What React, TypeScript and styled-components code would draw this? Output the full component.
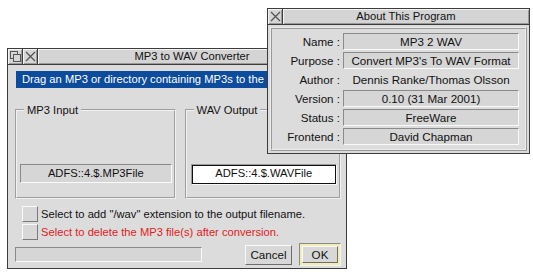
import React from "react";
import styled, { createGlobalStyle } from "styled-components";

const Global = createGlobalStyle`
  html, body { margin: 0; padding: 0; background: #fff; }
  body {
    width: 533px; height: 276px; overflow: hidden;
    font-family: "Liberation Sans", Arial, sans-serif;
    font-size: 11.2px; color: #111;
  }
`;

const Desktop = styled.div`
  position: relative;
  width: 533px;
  height: 276px;
  background: #fff;
  overflow: hidden;
`;

const Window = styled.div<{ $x: number; $y: number; $w: number; $h: number }>`
  position: absolute;
  left: ${(p) => p.$x}px;
  top: ${(p) => p.$y}px;
  width: ${(p) => p.$w}px;
  height: ${(p) => p.$h}px;
  box-sizing: border-box;
  border: 1px solid #3c3c3c;
  background: #dcdcdc;
  display: flex;
  flex-direction: column;
`;

const TitleBar = styled.div`
  display: flex;
  height: 16px;
  box-sizing: border-box;
  border-bottom: 1px solid #3c3c3c;
  flex: none;
`;

const TitleIcon = styled.div`
  width: 15px;
  height: 15px;
  box-sizing: border-box;
  border-right: 1px solid #3c3c3c;
  background: #d6d6d6;
  box-shadow: inset 1px 1px 0 #f4f4f4, inset -1px -1px 0 #9a9a9a;
  display: flex;
  align-items: center;
  justify-content: center;
  flex: none;
`;

const Title = styled.div`
  flex: 1;
  height: 15px;
  line-height: 15px;
  text-align: center;
  background: #d4d4d4;
  box-shadow: inset 1px 1px 0 #f4f4f4, inset -1px -1px 0 #9a9a9a;
  color: #111;
  white-space: nowrap;
`;

const MainBody = styled.div`
  display: flex;
  flex-direction: column;
  padding: 6px 5px 0 7px;
`;

const Banner = styled.div`
  margin-left: 1px;
  height: 17px;
  line-height: 17px;
  background: #0d4c9c;
  color: #fff;
  padding-left: 6px;
  white-space: nowrap;
  overflow: hidden;
`;

const GroupRow = styled.div`
  display: flex;
  gap: 9px;
  margin-top: 21px;
  height: 90px;
`;

const Group = styled.div<{ $w: number }>`
  position: relative;
  width: ${(p) => p.$w}px;
  box-sizing: border-box;
  border: 2px groove #f2f2f2;
  padding: 53px 2px 0 3px;
`;

const GroupLabel = styled.span`
  position: absolute;
  top: -8px;
  left: 7px;
  padding: 0 3px;
  background: #dcdcdc;
  line-height: 14px;
  white-space: nowrap;
`;

const PathField = styled.div<{ $white?: boolean }>`
  box-sizing: border-box;
  height: ${(p) => (p.$white ? 21 : 19)}px;
  line-height: 17px;
  text-align: center;
  white-space: nowrap;
  border: 1px solid;
  border-color: ${(p) => (p.$white ? "#9a9a9a #f8f8f8 #f8f8f8 #9a9a9a" : "#8a8a8a #fafafa #fafafa #8a8a8a")};
  background: ${(p) => (p.$white ? "#fff" : "#d6d6d6")};
  box-shadow: ${(p) => (p.$white ? "inset 0 0 0 1px #111" : "none")};
  margin-left: ${(p) => (p.$white ? 1 : 0)}px;
`;

const OptionList = styled.div`
  display: flex;
  flex-direction: column;
  gap: 2px;
  margin-top: 7px;
  padding-left: 7px;
`;

const Option = styled.div<{ $red?: boolean }>`
  display: flex;
  align-items: center;
  gap: 3px;
  height: 16px;
  color: ${(p) => (p.$red ? "#e31b1b" : "#111")};
  white-space: nowrap;
`;

const CheckBox = styled.div`
  width: 16px;
  height: 16px;
  box-sizing: border-box;
  border: 1px solid;
  border-color: #fafafa #7a7a7a #7a7a7a #fafafa;
  background: #d8d8d8;
  flex: none;
`;

const ActionRow = styled.div`
  display: flex;
  align-items: center;
  margin-top: 3px;
  height: 23px;
`;

const StatusField = styled.div`
  width: 187px;
  height: 15px;
  box-sizing: border-box;
  border: 1px solid;
  border-color: #8a8a8a #fafafa #fafafa #8a8a8a;
  background: #d6d6d6;
`;

const Spacer = styled.div`
  flex: 1;
`;

const Button = styled.div`
  width: 47px;
  height: 20px;
  box-sizing: border-box;
  border: 1px solid;
  border-color: #fafafa #6e6e6e #6e6e6e #fafafa;
  background: #d8d8d8;
  text-align: center;
  line-height: 18px;
  font-size: 11.6px;
`;

const DefaultRing = styled.div`
  margin-left: 7px;
  width: 42px;
  height: 23px;
  box-sizing: border-box;
  border: 1px solid;
  border-color: #8a8a8a #f4f4f4 #f4f4f4 #8a8a8a;
  background: #f3ecb4;
  padding: 2px;
  display: flex;
`;

const OkButton = styled(Button)`
  width: auto;
  flex: 1;
  height: auto;
  line-height: 15px;
`;

const AboutBody = styled.div`
  padding: 2px 2px 0 2px;
`;

const AboutFrame = styled.div`
  box-sizing: border-box;
  height: 124px;
  border: 2px ridge #ececec;
  padding: 4px 0 0 2px;
  display: grid;
  grid-template-columns: 66px 176px;
  grid-auto-rows: 17px;
  column-gap: 3px;
  row-gap: 2px;
`;

const InfoLabel = styled.div`
  text-align: right;
  line-height: 17px;
  white-space: nowrap;
  font-size: 11.6px;
`;

const InfoValue = styled.div<{ $plain?: boolean }>`
  box-sizing: border-box;
  text-align: center;
  line-height: 15px;
  white-space: nowrap;
  font-size: 11.6px;
  border: 1px solid;
  border-color: ${(p) => (p.$plain ? "transparent" : "#8a8a8a #fafafa #fafafa #8a8a8a")};
  background: ${(p) => (p.$plain ? "transparent" : "#d6d6d6")};
`;

const BackGlyph = () => (
  <svg width="11" height="11" viewBox="0 0 11 11">
    <rect x="0.5" y="0.5" width="7" height="7" fill="none" stroke="#555" />
    <rect x="3.5" y="3.5" width="7" height="7" fill="#d6d6d6" stroke="#555" />
  </svg>
);

const CloseGlyph = () => (
  <svg width="11" height="11" viewBox="0 0 11 11">
    <path d="M1 1 L10 10 M10 1 L1 10" stroke="#555" strokeWidth="1.3" />
  </svg>
);

const info: [string, string, boolean?][] = [
  ["Name :", "MP3 2 WAV"],
  ["Purpose :", "Convert MP3's To WAV Format"],
  ["Author :", "Dennis Ranke/Thomas Olsson", true],
  ["Version :", "0.10 (31 Mar 2001)"],
  ["Status :", "FreeWare"],
  ["Frontend :", "David Chapman"],
];

export default function App() {
  return (
    <Desktop>
      <Global />
      <Window $x={7} $y={48} $w={340} $h={221}>
        <TitleBar>
          <TitleIcon>
            <BackGlyph />
          </TitleIcon>
          <TitleIcon>
            <CloseGlyph />
          </TitleIcon>
          <Title>MP3 to WAV Converter</Title>
        </TitleBar>
        <MainBody>
          <Banner>Drag an MP3 or directory containing MP3s to the</Banner>
          <GroupRow>
            <Group $w={161}>
              <GroupLabel>MP3 Input</GroupLabel>
              <PathField>ADFS::4.$.MP3File</PathField>
            </Group>
            <Group $w={157}>
              <GroupLabel>WAV Output</GroupLabel>
              <PathField $white>ADFS::4.$.WAVFile</PathField>
            </Group>
          </GroupRow>
          <OptionList>
            <Option>
              <CheckBox />
              Select to add "/wav" extension to the output filename.
            </Option>
            <Option $red>
              <CheckBox />
              Select to delete the MP3 file(s) after conversion.
            </Option>
          </OptionList>
          <ActionRow>
            <StatusField />
            <Spacer />
            <Button>Cancel</Button>
            <DefaultRing>
              <OkButton>OK</OkButton>
            </DefaultRing>
          </ActionRow>
        </MainBody>
      </Window>

      <Window $x={267} $y={8} $w={263} $h={146}>
        <TitleBar>
          <TitleIcon>
            <CloseGlyph />
          </TitleIcon>
          <Title>About This Program</Title>
        </TitleBar>
        <AboutBody>
          <AboutFrame>
            {info.map(([label, value, plain]) => (
              <React.Fragment key={label}>
                <InfoLabel>{label}</InfoLabel>
                <InfoValue $plain={plain}>{value}</InfoValue>
              </React.Fragment>
            ))}
          </AboutFrame>
        </AboutBody>
      </Window>
    </Desktop>
  );
}
